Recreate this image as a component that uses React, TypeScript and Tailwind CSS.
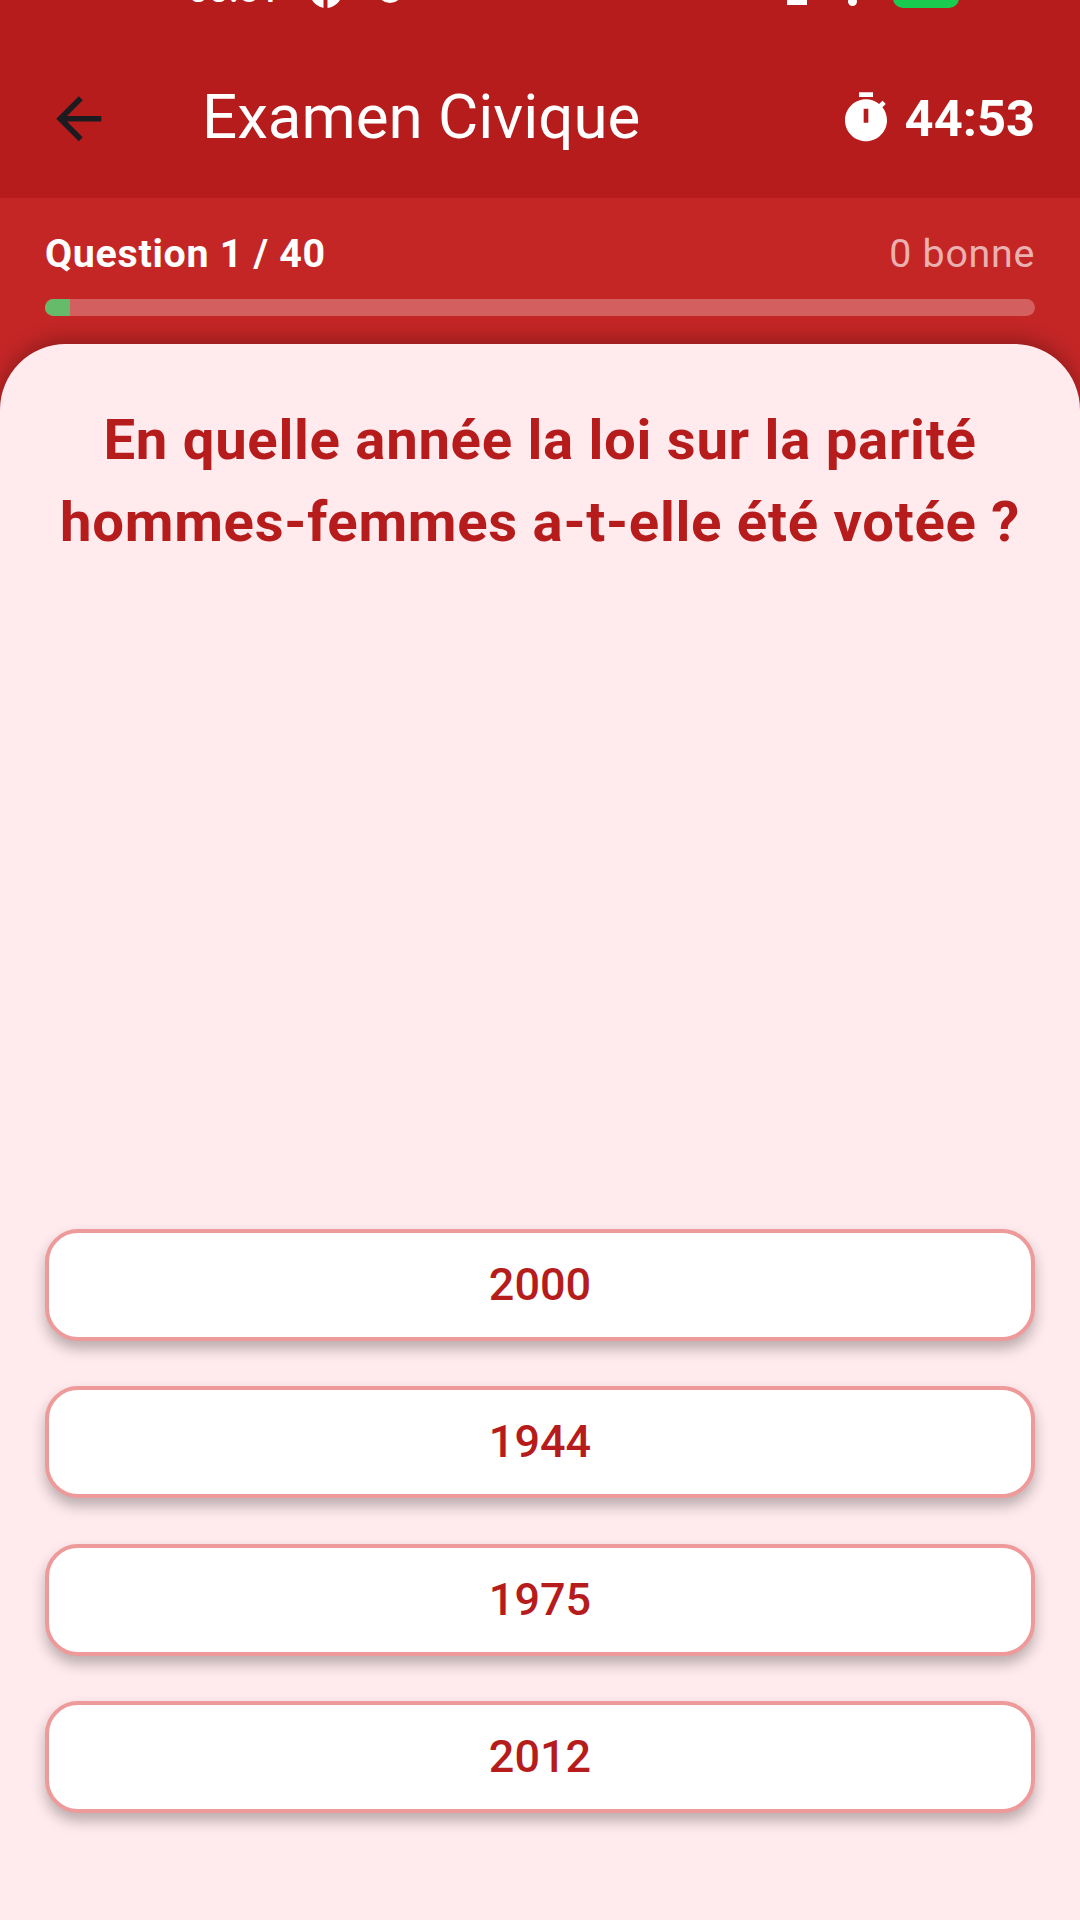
import React from "react";

const options = ["2000", "1944", "1975", "2012"];

export default function App() {
  return (
    <div
      className="w-[1080px] h-[1920px] flex flex-col overflow-hidden bg-[#C42626]"
      style={{ fontFamily: "Roboto, sans-serif" }}
    >
      <header className="relative h-[198px] shrink-0 bg-[#B71C1C] flex items-center pl-[45px] pr-[45px] pt-[40px]">
        <div className="absolute left-0 top-0 w-full h-[10px] overflow-hidden">
          <span className="absolute left-[188px] top-[-28px] text-[36px] leading-[36px] text-white font-medium">00:51</span>
          <svg className="absolute left-[308px] top-[-18px]" width="36" height="26" viewBox="0 0 36 26">
            <circle cx="18" cy="10" r="16" fill="#fff" />
            <rect x="15.5" y="0" width="4" height="26" fill="#B71C1C" />
          </svg>
          <svg className="absolute left-[375px] top-[-18px]" width="30" height="26" viewBox="0 0 30 26">
            <circle cx="15" cy="8" r="11" fill="none" stroke="#fff" strokeWidth="4" />
          </svg>
          <div className="absolute left-[787px] top-[-10px] w-[20px] h-[15px] bg-white" />
          <div className="absolute left-[848px] top-[-3px] w-[9px] h-[9px] rounded-full bg-white" />
          <div className="absolute left-[893px] top-[-20px] w-[66px] h-[28px] rounded-[10px] bg-[#19CC4F]" />
        </div>
        <svg className="shrink-0" width="67.5" height="67.5" viewBox="0 0 24 24" fill="#1C1B1F">
          <path d="M20 11H7.83l5.59-5.59L12 4l-8 8 8 8 1.41-1.41L7.83 13H20v-2z" />
        </svg>
        <h1 className="ml-[89.5px] -mt-[2px] text-[61.875px] leading-none font-normal text-white flex-1">Examen Civique</h1>
        <div className="flex items-center gap-[11px]">
          <svg className="-mt-[2px]" width="56" height="56" viewBox="0 0 24 24" fill="#fff">
            <path d="M15 1H9v2h6V1zm4.03 6.39 1.42-1.42c-.43-.51-.9-.99-1.41-1.41l-1.42 1.42C16.07 4.74 14.12 4 12 4c-4.97 0-9 4.03-9 9s4.02 9 9 9 9-4.03 9-9c0-2.12-.74-4.07-1.97-5.61zM13 14h-2V8h2v6z" />
          </svg>
          <span className="text-[50.625px] leading-none font-bold text-white">44:53</span>
        </div>
      </header>

      <section className="h-[146px] shrink-0 px-[45px] pt-[34px]">
        <div className="flex items-center justify-between h-[44px]">
          <span className="text-[39.375px] leading-none font-bold tracking-[0.7px] text-white">Question 1 / 40</span>
          <span className="text-[39.375px] leading-none tracking-[0.7px] text-[#EBB0B0]">0 bonne</span>
        </div>
        <div className="mt-[23px] h-[17px] rounded-full overflow-hidden bg-[#D35F5F]">
          <div className="h-full w-[25px] bg-[#66BB6A]" />
        </div>
      </section>

      <main className="flex-1 flex flex-col rounded-t-[66px] bg-[#FFEBEE] px-[45px] pt-[55px] shadow-[0_-4px_20px_rgba(0,0,0,0.28)] relative">
        <h2 className="text-center text-[56.25px] tracking-[0.7px] leading-[82px] font-bold text-[#B71C1C] -mx-[10px]">
          En quelle année la loi sur la parité
          <br />
          hommes-femmes a-t-elle été votée ?
        </h2>
        <div className="flex-1" />
        <div className="flex flex-col gap-[45.5px] pb-[107px]">
          {options.map((o) => (
            <button
              key={o}
              className="h-[112px] rounded-[33px] border-[4px] border-[#EF9A9A] bg-white flex items-center justify-center text-[45px] font-medium text-[#B71C1C] shadow-[0_8px_14px_rgba(0,0,0,0.27)]"
            >
              {o}
            </button>
          ))}
        </div>
      </main>
    </div>
  );
}
